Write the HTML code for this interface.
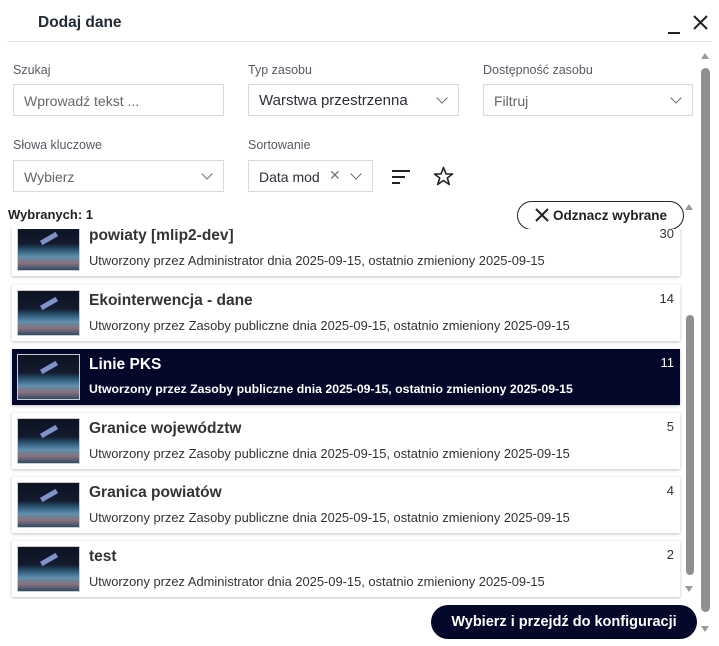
<!DOCTYPE html>
<html><head><meta charset="utf-8"><style>
*{box-sizing:border-box;margin:0;padding:0}
body{width:719px;height:646px;background:#fff;font-family:"Liberation Sans",sans-serif;color:#2b2f3a;position:relative;overflow:hidden}
.abs{position:absolute}
.lbl{font-size:12.5px;color:#555b66}
.in{border:1px solid #d6d9de;height:32px;font-size:14px;color:#666;padding:8px 10px;white-space:nowrap;overflow:hidden}
.chev{position:absolute;right:12px;top:9px;width:8px;height:8px;border-right:1.3px solid #667;border-bottom:1.3px solid #667;transform:rotate(45deg)}
.card{position:absolute;left:12px;width:668px;height:56px;background:#fff;box-shadow:0 1px 3px rgba(0,0,0,.25);}
.card .th{position:absolute;left:5px;top:5px;width:63px;height:46px;background:linear-gradient(180deg,#0c1322 0%,#121a2c 40%,#2e5876 55%,#5f8fae 70%,#8a6f79 85%,#2b4d6a 100%);border:1px solid #ccc}
.card .th:after{content:"";position:absolute;left:22px;top:10px;width:18px;height:5px;background:#7f91c9;transform:rotate(-30deg)}
.card .t{position:absolute;left:77px;top:7px;font-size:15.5px;font-weight:bold;color:#333;}
.card .s{position:absolute;left:77px;top:33px;font-size:12.9px;color:#333;white-space:nowrap}
.card .n{position:absolute;right:6px;top:6px;font-size:13px;color:#333}
.sel{background:#03082a}
.sel .t,.sel .s,.sel .n{color:#fff}
.sel .s{font-weight:bold;font-size:12.3px}
</style></head><body>
<div class="abs" style="left:38px;top:14px;font-size:15.5px;font-weight:bold;color:#222a36">Dodaj dane</div>
<div class="abs" style="left:668px;top:32px;width:12px;height:2px;background:#222"></div>
<svg class="abs" style="left:693px;top:15px" width="15" height="15"><path d="M1 1L14 14M14 1L1 14" stroke="#222" stroke-width="2"/></svg>
<div class="abs" style="left:7px;top:41px;width:705px;height:1px;background:#e3e5e8"></div>
<div class="abs" style="left:701px;top:53px;width:0;height:0;border-left:4px solid transparent;border-right:4px solid transparent;border-bottom:6px solid #999"></div>
<div class="abs" style="left:701px;top:68px;width:9px;height:544px;border-radius:5px;background:#8f8f8f"></div>
<div class="abs" style="left:701px;top:626px;width:0;height:0;border-left:4px solid transparent;border-right:4px solid transparent;border-top:6px solid #999"></div>

<div class="abs lbl" style="left:13px;top:63px">Szukaj</div>
<div class="abs in" style="left:13px;top:84px;width:211px">Wprowadź tekst ...</div>
<div class="abs lbl" style="left:248px;top:63px">Typ zasobu</div>
<div class="abs in" style="left:248px;top:84px;width:211px;color:#2b2f3a;font-size:15px;padding-top:7px">Warstwa przestrzenna<span class="chev"></span></div>
<div class="abs lbl" style="left:483px;top:63px">Dostępność zasobu</div>
<div class="abs in" style="left:483px;top:84px;width:210px">Filtruj<span class="chev"></span></div>

<div class="abs lbl" style="left:13px;top:138px">Słowa kluczowe</div>
<div class="abs in" style="left:13px;top:160px;width:211px">Wybierz<span class="chev"></span></div>
<div class="abs lbl" style="left:248px;top:138px">Sortowanie</div>
<div class="abs in" style="left:248px;top:160px;width:125px;color:#2b2f3a">Data mod<span style="position:absolute;left:80px;top:6px;color:#777">✕</span><span class="chev"></span></div>
<svg class="abs" style="left:391px;top:169px" width="20" height="16"><path d="M1 2H19M1 8H14M1 14H9" stroke="#222" stroke-width="2"/></svg>
<svg class="abs" style="left:433px;top:166px" width="21" height="20"><path d="M10.5 1.5L13 8H19.5L14.3 12L16.3 18.5L10.5 14.5L4.7 18.5L6.7 12L1.5 8H8Z" fill="none" stroke="#222" stroke-width="1.6" stroke-linejoin="round"/></svg>

<div class="abs" style="left:8px;top:207px;font-size:13px;font-weight:bold;color:#222">Wybranych: 1</div>
<div class="abs" style="left:517px;top:201px;width:167px;height:29px;border:1.3px solid #222;border-radius:15px;font-size:13.5px;font-weight:bold;color:#222;padding:6px 0 0 35px">Odznacz wybrane</div>
<svg class="abs" style="left:534px;top:207px" width="16" height="16"><path d="M2 2L14 14M14 2L2 14" stroke="#222" stroke-width="2"/></svg>

<div class="abs" style="left:0;top:229px;width:690px;height:370px;overflow:hidden">
 <div class="card" style="top:-9px"><div class="th"></div><div class="t">powiaty [mlip2-dev]</div><div class="s">Utworzony przez Administrator dnia 2025-09-15, ostatnio zmieniony 2025-09-15</div><div class="n">30</div></div>
 <div class="card" style="top:56px"><div class="th"></div><div class="t">Ekointerwencja - dane</div><div class="s">Utworzony przez Zasoby publiczne dnia 2025-09-15, ostatnio zmieniony 2025-09-15</div><div class="n">14</div></div>
 <div class="card sel" style="top:120px"><div class="th"></div><div class="t">Linie PKS</div><div class="s">Utworzony przez Zasoby publiczne dnia 2025-09-15, ostatnio zmieniony 2025-09-15</div><div class="n">11</div></div>
 <div class="card" style="top:184px"><div class="th"></div><div class="t">Granice województw</div><div class="s">Utworzony przez Zasoby publiczne dnia 2025-09-15, ostatnio zmieniony 2025-09-15</div><div class="n">5</div></div>
 <div class="card" style="top:248px"><div class="th"></div><div class="t">Granica powiatów</div><div class="s">Utworzony przez Zasoby publiczne dnia 2025-09-15, ostatnio zmieniony 2025-09-15</div><div class="n">4</div></div>
 <div class="card" style="top:312px"><div class="th"></div><div class="t">test</div><div class="s">Utworzony przez Administrator dnia 2025-09-15, ostatnio zmieniony 2025-09-15</div><div class="n">2</div></div>
</div>
<div class="abs" style="left:685px;top:204px;width:0;height:0;border-left:4px solid transparent;border-right:4px solid transparent;border-bottom:6px solid #999"></div>
<div class="abs" style="left:686px;top:315px;width:8px;height:260px;border-radius:4px;background:#8f8f8f"></div>
<div class="abs" style="left:685px;top:586px;width:0;height:0;border-left:4px solid transparent;border-right:4px solid transparent;border-top:6px solid #999"></div>

<div class="abs" style="left:431px;top:605px;width:266px;height:34px;border-radius:17px;background:#03082a;color:#fff;font-size:14.5px;font-weight:bold;text-align:center;line-height:34px">Wybierz i przejdź do konfiguracji</div>
</body></html>
